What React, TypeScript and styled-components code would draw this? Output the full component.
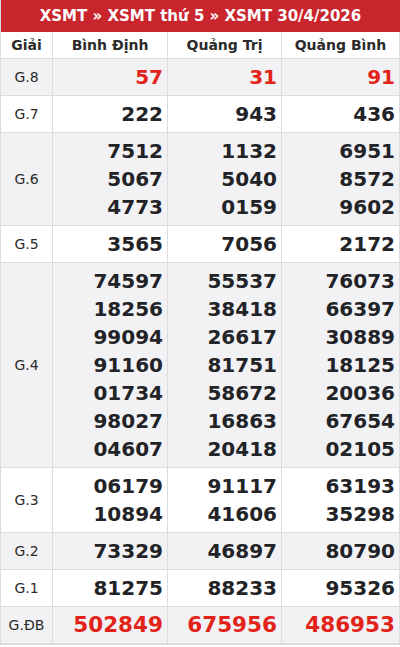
import React from "react";
import styled, { createGlobalStyle } from "styled-components";

const GlobalStyle = createGlobalStyle`
  body {
    margin: 0;
    background: #ffffff;
    font-family: "DejaVu Sans", "Liberation Sans", sans-serif;
  }
`;

const Wrapper = styled.div`
  width: 399px;
  border-left: 1px solid #dcdcdf;
  border-bottom: 1px solid #dcdcdf;
`;

const Title = styled.div`
  height: 32px;
  display: flex;
  align-items: center;
  justify-content: center;
  background-color: #c9252c;
  color: #ffffff;
  font-size: 15px;
  font-weight: bold;
`;

const Table = styled.table`
  width: 100%;
  border-collapse: collapse;
  table-layout: fixed;
`;

const HeadCell = styled.th<{ $w?: string }>`
  width: ${(p) => p.$w || "auto"};
  height: 26px;
  padding: 0;
  font-size: 14px;
  font-weight: bold;
  color: #2b2b2b;
  text-align: center;
  border: 1px solid #dcdcdf;
  border-top: none;
  border-left: none;
`;

const Row = styled.tr<{ $grey?: boolean }>`
  background-color: ${(p) => (p.$grey ? "#f2f2f4" : "#ffffff")};
`;

const LabelCell = styled.td`
  padding: 0;
  font-size: 14px;
  color: #2b2b2b;
  text-align: center;
  border: 1px solid #dcdcdf;
  border-left: none;
`;

const NumCell = styled.td`
  padding: 4px 4px 4px 0;
  text-align: right;
  vertical-align: middle;
  border: 1px solid #dcdcdf;
  border-left: none;
`;

const Num = styled.div<{ $red?: boolean; $big?: boolean }>`
  font-size: ${(p) => (p.$big ? "21.5px" : "20px")};
  line-height: 28px;
  font-weight: bold;
  color: ${(p) => (p.$red ? "#e2231a" : "#222327")};
`;

type Prize = {
  label: string;
  values: string[][];
  red?: boolean;
  big?: boolean;
};

const prizes: Prize[] = [
  { label: "G.8", values: [["57"], ["31"], ["91"]], red: true },
  { label: "G.7", values: [["222"], ["943"], ["436"]] },
  {
    label: "G.6",
    values: [
      ["7512", "5067", "4773"],
      ["1132", "5040", "0159"],
      ["6951", "8572", "9602"],
    ],
  },
  { label: "G.5", values: [["3565"], ["7056"], ["2172"]] },
  {
    label: "G.4",
    values: [
      ["74597", "18256", "99094", "91160", "01734", "98027", "04607"],
      ["55537", "38418", "26617", "81751", "58672", "16863", "20418"],
      ["76073", "66397", "30889", "18125", "20036", "67654", "02105"],
    ],
  },
  {
    label: "G.3",
    values: [
      ["06179", "10894"],
      ["91117", "41606"],
      ["63193", "35298"],
    ],
  },
  { label: "G.2", values: [["73329"], ["46897"], ["80790"]] },
  { label: "G.1", values: [["81275"], ["88233"], ["95326"]] },
  {
    label: "G.ĐB",
    values: [["502849"], ["675956"], ["486953"]],
    red: true,
    big: true,
  },
];

const App = () => {
  return (
    <Wrapper>
      <GlobalStyle />
      <Title>XSMT » XSMT thứ 5 » XSMT 30/4/2026</Title>
      <Table>
        <thead>
          <tr>
            <HeadCell $w="51px">Giải</HeadCell>
            <HeadCell $w="114px">Bình Định</HeadCell>
            <HeadCell $w="113px">Quảng Trị</HeadCell>
            <HeadCell>Quảng Bình</HeadCell>
          </tr>
        </thead>
        <tbody>
          {prizes.map((p, i) => (
            <Row key={p.label} $grey={i % 2 === 0}>
              <LabelCell>{p.label}</LabelCell>
              {p.values.map((col, j) => (
                <NumCell key={j}>
                  {col.map((v) => (
                    <Num key={v} $red={p.red} $big={p.big}>
                      {v}
                    </Num>
                  ))}
                </NumCell>
              ))}
            </Row>
          ))}
        </tbody>
      </Table>
    </Wrapper>
  );
};

export default App;
